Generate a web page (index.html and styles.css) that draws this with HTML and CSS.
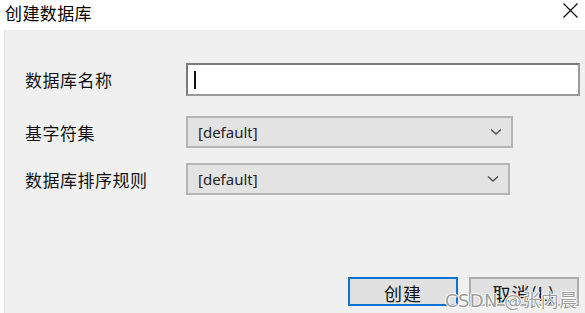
FILE: index.html
```html
<!DOCTYPE html>
<html lang="zh">
<head>
<meta charset="utf-8">
<link rel="stylesheet" href="styles.css">
</head>
<body>
<div class="dialog">
  <div class="titlebar">
    <span class="title">创建数据库</span>
    <svg class="close" width="15" height="15" viewBox="0 0 15 15"><path d="M0.5 0.5L14.5 14.5M14.5 0.5L0.5 14.5" stroke="#000" stroke-width="1.1" fill="none"/></svg>
  </div>
  <div class="panel">
    <div class="form">
      <div class="row r1">
        <label class="label">数据库名称</label>
        <div class="input"><span class="caret"></span></div>
      </div>
      <div class="row r2">
        <label class="label">基字符集</label>
        <div class="select s1"><span>[default]</span>
          <svg width="12" height="8" viewBox="0 0 12 8"><path d="M1 1.5L6 6L11 1.5" stroke="#505050" stroke-width="1.4" fill="none"/></svg>
        </div>
      </div>
      <div class="row r3">
        <label class="label">数据库排序规则</label>
        <div class="select s2"><span>[default]</span>
          <svg width="12" height="8" viewBox="0 0 12 8"><path d="M1 1.5L6 6L11 1.5" stroke="#505050" stroke-width="1.4" fill="none"/></svg>
        </div>
      </div>
    </div>
    <div class="buttons">
      <button class="btn primary">创建</button>
      <button class="btn">取消(L)</button>
      <span class="watermark">CSDN @张内晨</span>
    </div>
  </div>
</div>
</body>
</html>
```
FILE: styles.css
```css
html, body {
  margin: 0;
  padding: 0;
  background: #ffffff;
}
body {
  width: 585px;
  height: 313px;
  overflow: hidden;
  font-family: "Noto Sans CJK SC", "Noto Sans", sans-serif;
  color: #000;
}
.dialog {
  display: flex;
  flex-direction: column;
  height: 313px;
}
.titlebar {
  height: 30px;
  display: flex;
  align-items: center;
  justify-content: space-between;
  padding: 0 7px 0 5px;
  box-sizing: border-box;
}
.title {
  font-size: 17px;
  letter-spacing: 0.4px;
  margin-top: -6px;
}
.close {
  margin-top: -10px;
}
.panel {
  flex: 1;
  margin-left: 4px;
  background: #f0f0f0;
  border-left: 1px solid #e4e4e4;
  display: flex;
  flex-direction: column;
  padding: 33px 0 7px 0;
  position: relative;
}
.form {
  display: flex;
  flex-direction: column;
}
.row {
  display: flex;
  align-items: center;
}
.r2 { margin-top: 20px; }
.r3 { margin-top: 15px; }
.label {
  width: 181px;
  padding-left: 20px;
  box-sizing: border-box;
  font-size: 17px;
  letter-spacing: 0.5px;
  color: #111;
}
.input {
  width: 394px;
  height: 33px;
  box-sizing: border-box;
  border: 2px solid #7a7a7a;
  border-color: #7a7a7a #9a9a9a #9a9a9a #7a7a7a;
  background: #fff;
  display: flex;
  align-items: center;
  padding-left: 6px;
}
.caret {
  width: 2px;
  height: 18px;
  background: #111;
}
.select {
  height: 32px;
  box-sizing: border-box;
  border: 2px solid #b5b5b5;
  background: #e3e3e3;
  display: flex;
  align-items: center;
  justify-content: space-between;
  padding: 0 9px 0 10px;
  font-family: "Noto Sans", "Open Sans", sans-serif;
  font-size: 15px;
  color: #222;
}
.s1 { width: 327px; }
.s2 { width: 324px; }
.select span { margin-top: -1px; }
.buttons {
  margin-top: auto;
  display: flex;
  padding-left: 343px;
  gap: 11px;
}
.btn {
  width: 110px;
  height: 29px;
  box-sizing: border-box;
  border: 2px solid #adadad;
  background: #e1e1e1;
  font-family: "Noto Sans CJK SC", sans-serif;
  font-size: 18px;
  letter-spacing: 1px;
  line-height: 22px;
  padding: 2px 0 0 0;
  color: #111;
}
.btn.primary {
  border-color: #0a74d4;
}
.watermark {
  position: absolute;
  left: 440px;
  bottom: 1px;
  font-family: "DejaVu Sans", "Noto Sans CJK SC", sans-serif;
  font-size: 18px;
  letter-spacing: 0.4px;
  color: rgba(140,140,140,0.85);
  text-shadow: 1px 0 #fff, -1px 0 #fff, 0 1px #fff, 0 -1px #fff;
  white-space: nowrap;
}
```
